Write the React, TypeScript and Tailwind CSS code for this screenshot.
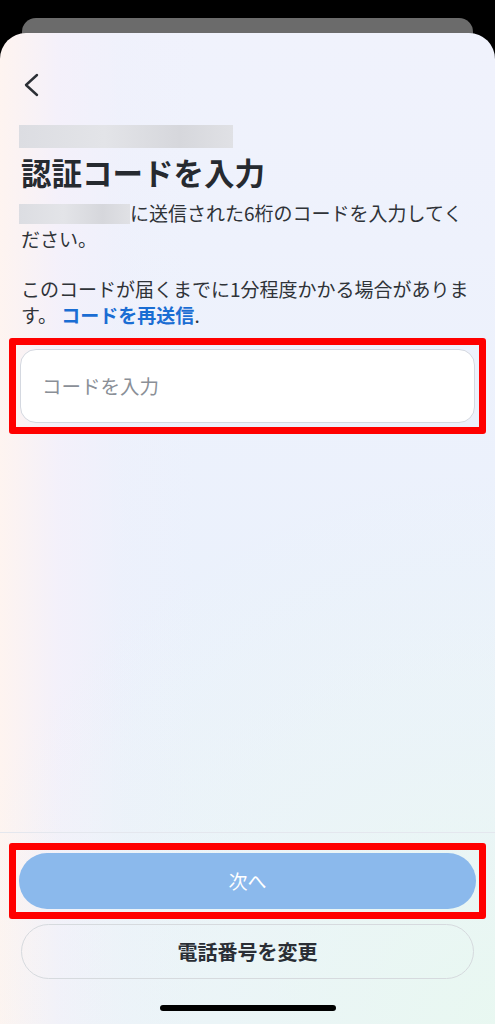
const jp = "font-['Noto_Sans_CJK_JP','Noto_Sans',sans-serif]";

function BlurBox({ className }: { className: string }) {
  return (
    <span
      className={`inline-block bg-[linear-gradient(90deg,#dcdde2_0%,#e3e4e8_40%,#d6d7dc_75%,#e0e1e5_100%)] ${className}`}
    />
  );
}

export default function App() {
  return (
    <div className={`flex h-[1024px] w-full flex-col overflow-hidden bg-black ${jp}`}>
      {/* card peeking behind the sheet */}
      <div className="mx-[22px] mt-[18px] h-[40px] rounded-t-[14px] bg-[#6b6b6b]" />

      {/* sheet */}
      <div className="relative -mt-[25px] flex flex-1 flex-col rounded-t-[26px] bg-[radial-gradient(circle_at_100%_100%,rgba(232,248,240,0.9)_0%,rgba(234,246,244,0.5)_25%,rgba(235,241,252,0)_50%),linear-gradient(90deg,rgba(254,244,240,1)_0%,rgba(245,240,250,0.8)_12%,rgba(239,240,251,0.4)_25%,rgba(235,241,252,0)_40%),linear-gradient(180deg,#f0f2fc_0%,#ebf1fc_55%,#ecf3fa_100%)]">
        <div className="flex flex-col px-[21px]">
          <button className="mt-[40px] flex h-[24px] w-[24px] items-center justify-start text-[#2b2f35]">
            <svg width="16" height="24" viewBox="0 0 16 24" fill="none" className="ml-[2px]">
              <path d="M14 2 L3 12 L14 22" stroke="currentColor" strokeWidth="2.4" strokeLinecap="round" strokeLinejoin="round" />
            </svg>
          </button>

          <BlurBox className="-ml-[2px] mt-[28px] h-[23px] w-[214px]" />

          <h1 className="mt-[6px] text-[30.5px] font-bold leading-[36px] text-[#262a30]">
            認証コードを入力
          </h1>

          <p className="mt-[10px] text-[19px] leading-[26px] text-[#2f3338]">
            <span className="block whitespace-nowrap">
              <BlurBox className="-ml-[2px] h-[20px] w-[111px] align-[-3px]" />
              に送信された6桁のコードを入力してく
            </span>
            <span className="block">ださい。</span>
          </p>

          <p className="mt-[24px] text-[19px] leading-[26px] text-[#2f3338]">
            <span className="block whitespace-nowrap">このコードが届くまでに1分程度かかる場合がありま</span>
            <span className="block">
              す。 <span className="font-bold text-[#1a6dd3]">コードを再送信</span>.
            </span>
          </p>

          {/* highlighted input */}
          <div className="-mx-[12px] mt-[10px] rounded-[3px] border-[7px] border-[#ff0000] p-[4px]">
            <div className="flex h-[74px] items-center rounded-[16px] border-[1.5px] border-[#d4d8e0] bg-white px-[21px]">
              <input
                className="w-full bg-transparent text-[19.5px] text-[#2f3338] outline-none placeholder:text-[#8a8f97]"
                placeholder="コードを入力"
              />
            </div>
          </div>
        </div>

        <div className="flex-1" />

        {/* footer */}
        <div className="flex flex-col border-t border-[#e4e7ee] px-[21px]">
          <div className="-mx-[12px] mt-[10px] rounded-[3px] border-[7px] border-[#ff0000] p-[3px]">
            <button className="flex h-[56px] w-full items-center justify-center rounded-full bg-[#8bb9ec] text-[19px] font-normal text-white">
              次へ
            </button>
          </div>
          <button className="mt-[5px] flex h-[55px] w-full items-center justify-center rounded-full border-[1.5px] border-[#d6dade] text-[20px] font-bold text-[#2a2e35]">
            電話番号を変更
          </button>
          <div className="mx-auto mb-[13px] mt-[26px] h-[6px] w-[176px] rounded-full bg-black" />
        </div>
      </div>
    </div>
  );
}
